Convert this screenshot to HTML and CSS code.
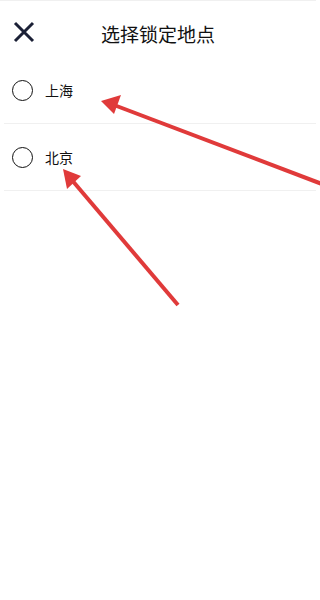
FILE: index.html
```html
<!DOCTYPE html>
<html lang="zh">
<head>
<meta charset="utf-8">
<link rel="stylesheet" href="styles.css">
</head>
<body>
<div class="page">
  <header class="header">
    <svg class="close" width="22" height="22" viewBox="0 0 22 22">
      <path d="M2 2 L20 20 M20 2 L2 20" stroke="#1b2036" stroke-width="3" fill="none"/>
    </svg>
    <h1 class="title">选择锁定地点</h1>
  </header>
  <ul class="list">
    <li class="row"><span class="radio"></span><span class="label">上海</span></li>
    <li class="row"><span class="radio"></span><span class="label">北京</span></li>
  </ul>
  <svg class="arrows" width="320" height="600" viewBox="0 0 320 600">
    <g stroke="#e03a3a" stroke-width="4" fill="#e03a3a">
      <line x1="322" y1="184" x2="114" y2="105"/>
      <line x1="178" y1="305" x2="71" y2="179"/>
    </g>
    <g fill="#e03a3a">
      <polygon points="101,101 121,95 114,114"/>
      <polygon points="63,169 81,176 67,189"/>
    </g>
  </svg>
</div>
</body>
</html>
```

FILE: styles.css
```css
* { box-sizing: border-box; }
html, body { margin: 0; padding: 0; background: #fff; }
body { font-family: "Noto Sans CJK SC", "Noto Sans", sans-serif; }
.page { position: relative; width: 320px; height: 600px; overflow: hidden; }
.header {
  position: relative;
  height: 57px;
  border-top: 1px solid #f0f0f0;
  margin-right: 4px;
  display: flex;
  align-items: center;
  justify-content: center;
}
.close { position: absolute; left: 13px; top: 20px; }
.title {
  margin: 0;
  font-size: 19px;
  font-weight: 400;
  color: #111;
  line-height: 1;
  margin-top: 8px;
}
.list { list-style: none; margin: 0 4px; padding: 0; }
.row {
  height: 67px;
  border-bottom: 1px solid #f0f0f0;
  display: flex;
  align-items: center;
  padding-left: 8px;
}
.radio {
  width: 21px;
  height: 21px;
  border: 1.8px solid #111;
  border-radius: 50%;
}
.label {
  margin-left: 12px;
  font-size: 14px;
  font-weight: 400;
  color: #111;
}
.arrows { position: absolute; left: 0; top: 0; pointer-events: none; }
```
